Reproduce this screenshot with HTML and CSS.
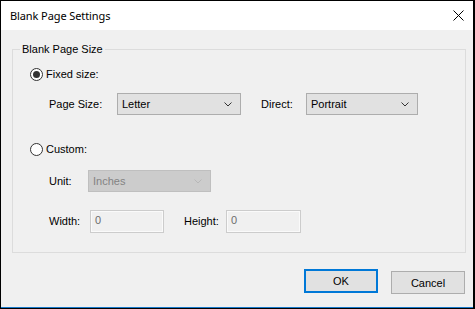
FILE: index.html
```html
<!DOCTYPE html>
<html>
<head>
<meta charset="utf-8">
<link rel="stylesheet" href="styles.css">
</head>
<body>
<div class="window">
  <div class="titlebar">
    <span class="title">Blank Page Settings</span>
    <svg class="close" width="11" height="11" viewBox="0 0 11 11"><path d="M0.5 0.5 L10.5 10.5 M10.5 0.5 L0.5 10.5" stroke="#000" stroke-width="1"/></svg>
  </div>
  <div class="content">
    <div class="group">
      <span class="legend">Blank Page Size</span>
      <div class="row radio-row r1">
        <span class="radio checked"><span class="dot"></span></span>
        <span class="radio-label">Fixed size:</span>
      </div>
      <div class="row field-row r2">
        <span class="label lbl-page">Page Size:</span>
        <div class="select sel-page"><span>Letter</span><svg class="chev" width="8" height="5" viewBox="0 0 8 5"><path d="M0.5 0.5 L4 4 L7.5 0.5" fill="none" stroke="#333" stroke-width="1"/></svg></div>
        <span class="label lbl-direct">Direct:</span>
        <div class="select sel-direct"><span>Portrait</span><svg class="chev" width="8" height="5" viewBox="0 0 8 5"><path d="M0.5 0.5 L4 4 L7.5 0.5" fill="none" stroke="#333" stroke-width="1"/></svg></div>
      </div>
      <div class="row radio-row r3">
        <span class="radio"></span>
        <span class="radio-label">Custom:</span>
      </div>
      <div class="row field-row r4">
        <span class="label lbl-unit">Unit:</span>
        <div class="select disabled sel-unit"><span>Inches</span><svg class="chev" width="8" height="5" viewBox="0 0 8 5"><path d="M0.5 0.5 L4 4 L7.5 0.5" fill="none" stroke="#b8b8b8" stroke-width="1"/></svg></div>
      </div>
      <div class="row field-row r5">
        <span class="label lbl-width">Width:</span>
        <div class="input inp-width">0</div>
        <span class="label lbl-height">Height:</span>
        <div class="input inp-height">0</div>
      </div>
    </div>
    <div class="buttons">
      <div class="btn ok">OK</div>
      <div class="btn cancel">Cancel</div>
    </div>
  </div>
</div>
</body>
</html>
```
FILE: styles.css
```css
html, body {
  margin: 0;
  padding: 0;
  background: #f0f0f0;
}
.window {
  width: 475px;
  height: 309px;
  box-sizing: border-box;
  border-top: 1px solid #000;
  border-left: 1px solid #000;
  border-right: 2px solid #000;
  border-bottom: 1px solid #000;
  background: #f0f0f0;
  box-shadow: inset 0 -1px 0 #1979ca;
  display: flex;
  flex-direction: column;
  font-family: "Liberation Sans", Arial, sans-serif;
  font-size: 11px;
  color: #000;
}
.titlebar {
  height: 29px;
  background: #fff;
  display: flex;
  align-items: center;
  justify-content: space-between;
  padding: 0 9px 0 9px;
  flex: none;
}
.title {
  font-family: "Noto Sans", sans-serif;
  font-size: 11px;
  letter-spacing: -0.1px;
  color: #000;
}
.close {
  display: block;
}
.content {
  flex: 1;
  padding: 19px 7px 0 11px;
  display: flex;
  flex-direction: column;
}
.group {
  position: relative;
  border: 1px solid #dcdcdc;
  height: 204px;
  box-sizing: border-box;
  padding: 0 0 0 17px;
}
.legend {
  position: absolute;
  left: 7px;
  top: -8px;
  padding: 0 2px;
  background: #f0f0f0;
  line-height: 14px;
}
.row {
  display: flex;
  align-items: center;
}
.radio-row {
  height: 14px;
}
.r1 { margin-top: 17px; }
.r2 { margin-top: 12px; height: 22px; }
.r3 { margin-top: 27px; }
.r4 { margin-top: 14px; height: 22px; }
.r5 { margin-top: 18px; height: 22px; }
.radio {
  width: 13px;
  height: 13px;
  box-sizing: border-box;
  border: 1px solid #333;
  border-radius: 50%;
  background: #fff;
  display: flex;
  align-items: center;
  justify-content: center;
  flex: none;
}
.dot {
  width: 7px;
  height: 7px;
  border-radius: 50%;
  background: #333;
}
.radio-label {
  margin-left: 3px;
}
.label {
  flex: none;
}
.lbl-page { margin-left: 19px; width: 68px; }
.lbl-direct { margin-left: 20px; width: 45px; }
.lbl-unit { margin-left: 19px; width: 39px; }
.lbl-width { margin-left: 19px; width: 41px; }
.lbl-height { margin-left: 20px; width: 42px; }
.select {
  height: 22px;
  box-sizing: border-box;
  border: 1px solid #adadad;
  background: #e1e1e1;
  display: flex;
  align-items: center;
  justify-content: space-between;
  padding: 0 8px 0 4px;
  flex: none;
}
.chev { display: block; }
.sel-page { width: 124px; }
.sel-direct { width: 112px; }
.sel-unit { width: 123px; }
.select.disabled {
  background: #cccccc;
  border-color: #bfbfbf;
  color: #838383;
}
.input {
  height: 23px;
  box-sizing: border-box;
  border: 1px solid #cccccc;
  box-shadow: inset 0 0 0 1px #fafafa;
  background: #f0f0f0;
  color: #6d6d6d;
  padding: 3px 0 0 4px;
  flex: none;
}
.inp-width { width: 74px; }
.inp-height { width: 75px; }
.buttons {
  display: flex;
  justify-content: flex-end;
  align-items: flex-start;
  margin-top: 16px;
  padding-right: 1px;
}
.btn {
  width: 74px;
  box-sizing: border-box;
  display: flex;
  align-items: center;
  justify-content: center;
  background: #e1e1e1;
}
.ok {
  height: 24px;
  border: 2px solid #0078d7;
}
.cancel {
  height: 23px;
  border: 1px solid #adadad;
  margin-left: 13px;
  margin-top: 2px;
}
```
